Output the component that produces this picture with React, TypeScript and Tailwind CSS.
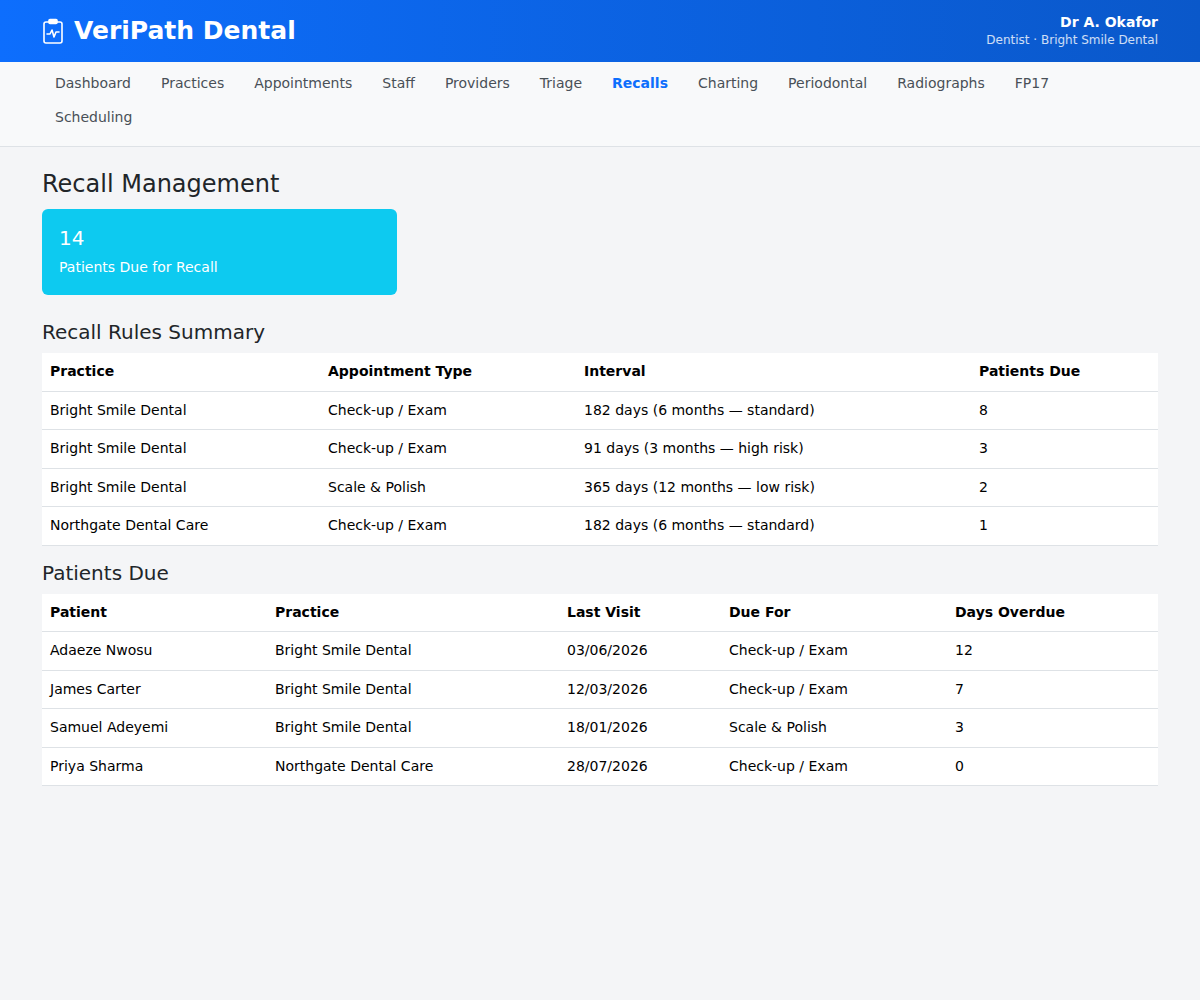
const nav = ['Dashboard', 'Practices', 'Appointments', 'Staff', 'Providers', 'Triage', 'Recalls', 'Charting', 'Periodontal', 'Radiographs', 'FP17', 'Scheduling'];

const rules = [
  ['Bright Smile Dental', 'Check-up / Exam', '182 days (6 months — standard)', '8'],
  ['Bright Smile Dental', 'Check-up / Exam', '91 days (3 months — high risk)', '3'],
  ['Bright Smile Dental', 'Scale & Polish', '365 days (12 months — low risk)', '2'],
  ['Northgate Dental Care', 'Check-up / Exam', '182 days (6 months — standard)', '1'],
];

const due = [
  ['Adaeze Nwosu', 'Bright Smile Dental', '03/06/2026', 'Check-up / Exam', '12'],
  ['James Carter', 'Bright Smile Dental', '12/03/2026', 'Check-up / Exam', '7'],
  ['Samuel Adeyemi', 'Bright Smile Dental', '18/01/2026', 'Scale & Polish', '3'],
  ['Priya Sharma', 'Northgate Dental Care', '28/07/2026', 'Check-up / Exam', '0'],
];

function Table({ head, rows, widths }: { head: string[]; rows: string[][]; widths: string[] }) {
  return (
    <table className="w-full bg-white text-[14px] text-black border-collapse table-fixed">
      <thead>
        <tr className="border-b border-[#dee2e6]">
          {head.map((h, i) => (
            <th key={h} className={`text-left font-bold px-2 h-[38px] ${widths[i]}`}>{h}</th>
          ))}
        </tr>
      </thead>
      <tbody>
        {rows.map((r, i) => (
          <tr key={i} className="border-b border-[#dee2e6]">
            {r.map((c, j) => (
              <td key={j} className="px-2 h-[38.5px]">{c}</td>
            ))}
          </tr>
        ))}
      </tbody>
    </table>
  );
}

export default function App() {
  return (
    <div className="min-h-[1000px] bg-[#f4f5f7] text-[#212529]" style={{ fontFamily: '"DejaVu Sans", sans-serif' }}>
      <header className="h-[62px] bg-gradient-to-r from-[#0d6efd] to-[#0a58ca] flex items-center justify-between px-[42px] text-white">
        <div className="flex items-center gap-[10px]">
          <svg width="22" height="26" viewBox="0 0 22 26" fill="none" stroke="white" strokeWidth="1.6" strokeLinejoin="round" strokeLinecap="round">
            <rect x="2" y="4" width="18" height="21" rx="2" />
            <rect x="7" y="1.5" width="8" height="4" rx="1" fill="white" />
            <path d="M5 16h3l2-4 2 7 2-5h3" />
          </svg>
          <span className="text-[25px] font-bold">VeriPath Dental</span>
        </div>
        <div className="text-right leading-tight">
          <div className="text-[14px] font-bold">Dr A. Okafor</div>
          <div className="text-[12px] text-white/80 mt-[2px]">Dentist · Bright Smile Dental</div>
        </div>
      </header>
      <nav className="bg-[#f8f9fa] border-b border-[#dee2e6] px-[40px] pt-[70px-70px] py-[4px] h-[85px]">
        <ul className="flex flex-wrap text-[14px] max-w-[1080px]">
          {nav.map((n) => (
            <li key={n} className={`px-[15px] h-[34px] flex items-center ${n === 'Recalls' ? 'text-[#0d6efd] font-bold' : 'text-[#495057]'}`}>{n}</li>
          ))}
        </ul>
      </nav>
      <main className="px-[42px] pt-[22px]">
        <h1 className="text-[24px] leading-[30px]">Recall Management</h1>
        <div className="mt-[10px] w-[355px] h-[86px] rounded-md bg-[#0dcaf0] text-white px-[17px] pt-[14px]">
          <div className="text-[20px]">14</div>
          <div className="text-[14px] mt-[4px]">Patients Due for Recall</div>
        </div>
        <h2 className="text-[20px] mt-[24px] mb-[8px] leading-[26px]">Recall Rules Summary</h2>
        <Table head={['Practice', 'Appointment Type', 'Interval', 'Patients Due']} rows={rules} widths={['w-[278px]', 'w-[256px]', 'w-[395px]', '']} />
        <h2 className="text-[20px] mt-[14px] mb-[8px] leading-[26px]">Patients Due</h2>
        <Table head={['Patient', 'Practice', 'Last Visit', 'Due For', 'Days Overdue']} rows={due} widths={['w-[225px]', 'w-[292px]', 'w-[162px]', 'w-[226px]', '']} />
      </main>
    </div>
  );
}
